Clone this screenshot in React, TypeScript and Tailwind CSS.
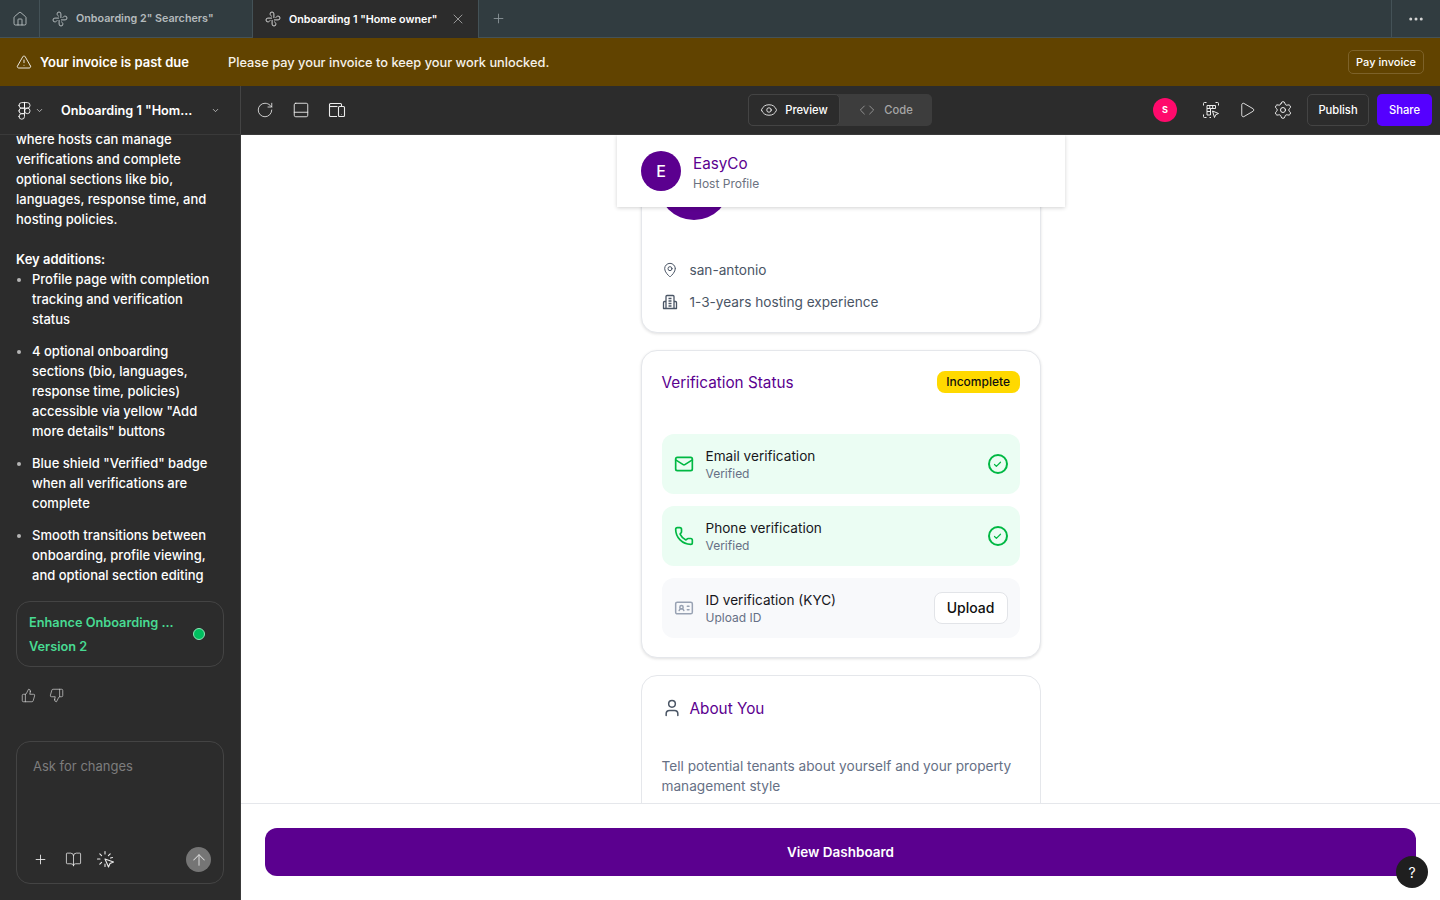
import React from "react";
import {
  BookOpen,
  Check,
  ChevronDown,
  Code,
  Ellipsis,
  Eye,
  Figma,
  House,
  Mail,
  MapPin,
  PanelBottom,
  Phone,
  Play,
  Plus,
  RotateCw,
  Settings,
  ThumbsDown,
  ThumbsUp,
  TriangleAlert,
  User,
  X,
  ArrowUp,
  IdCard,
} from "lucide-react";

const MakeIcon = () => (
  <svg width="16" height="16" viewBox="0 0 16 16" fill="none" stroke="currentColor" strokeWidth="1" strokeLinecap="round">
    {[0, 90, 180, 270].map((deg) => (
      <path key={deg} transform={`rotate(${deg} 8 8)`} d="M8.9 6.6V2.900a1.900 1.900 0 0 0-3.800 0c0 1 .6 1.600 1.300 2.200" />
    ))}
  </svg>
);

const ResponsiveIcon = () => (
  <svg width="18" height="18" viewBox="0 0 18 18" fill="none" stroke="currentColor" strokeWidth="1.1">
    <path d="M9 15.500H2.500a1 1 0 0 1-1-1v-11a1 1 0 0 1 1-1h10a1 1 0 0 1 1 1V5" />
    <path d="M1.500 5.500h8" />
    <rect x="10.500" y="5.500" width="6" height="10" rx="1" />
    <path d="M13.500 13.500v.4" />
  </svg>
);

const FrameIcon = () => (
  <svg width="18" height="18" viewBox="0 0 18 18" fill="none" stroke="currentColor" strokeWidth="1">
    <path d="M1.500 4.500v-2a1 1 0 0 1 1-1h2M13.500 1.500h2a1 1 0 0 1 1 1v2M1.500 13.500v2a1 1 0 0 0 1 1h2M7.500 16.500h1.500" />
    <path d="M5 4.500h8.500v3H8.500v6.500H5V4.500ZM5 7.500h3.500M5 10.500h3.500M7.800 4.500v3M10.700 4.500v3" />
    <path d="M10.500 10l6 2.500-2.800 1.200-1.200 2.800-2-6.500Z" />
  </svg>
);

const ClickSparkIcon = () => (
  <svg width="20" height="20" viewBox="0 0 20 20" fill="none" stroke="currentColor" strokeWidth="1.1" strokeLinecap="round">
    <path d="M9 1.500v2.500M3.800 3.800l1.800 1.800M14.200 3.800l-1.800 1.800M1.500 9H4M3.800 14.200l1.800-1.800M9 14v2.500M16.500 7.500l-2 .5" />
    <path d="M9 9l8.500 3-3.500 1.500-1.500 3.500L9 9Z" strokeLinejoin="round" />
  </svg>
);

const OfficeIcon = () => (
  <svg width="16" height="16" viewBox="0 0 16 16" fill="none" stroke="currentColor" strokeWidth="1.3" strokeLinejoin="round">
    <path d="M4 14.500V2.500a1 1 0 0 1 1-1h6a1 1 0 0 1 1 1v12" />
    <path d="M4 7.500H2.500a1 1 0 0 0-1 1v6h13v-6a1 1 0 0 0-1-1H12" />
    <path d="M6.500 4.500h3M6.500 7h3M6.500 9.500h3M6.500 12h3" />
  </svg>
);

const bullets = [
  "Profile page with completion tracking and verification status",
  '4 optional onboarding sections (bio, languages, response time, policies) accessible via yellow "Add more details" buttons',
  'Blue shield "Verified" badge when all verifications are complete',
  "Smooth transitions between onboarding, profile viewing, and optional section editing",
];

const VerifiedRow = ({ icon, title }: { icon: React.ReactNode; title: string }) => (
  <div className="flex h-[60px] items-center rounded-[12px] bg-[#ebfdf3] pl-[12px] pr-[12px]">
    <span className="w-[32px] text-[#00b843]">{icon}</span>
    <div className="flex-1 pt-[2px]">
      <p className="text-[13.6px] leading-[18px] text-[#17171c]">{title}</p>
      <p className="text-[12px] leading-[18px] text-[#667085]">Verified</p>
    </div>
    <span className="relative flex h-5 w-5 items-center justify-center rounded-full border-2 border-[#00b843] text-[#00b843]">
      <Check size={9} strokeWidth={3.2} />
    </span>
  </div>
);

export default function App() {
  return (
    <div className="flex h-[900px] w-[1440px] flex-col overflow-hidden bg-white font-['Inter',sans-serif]">
      {/* tab bar */}
      <div className="flex h-[38px] shrink-0 items-stretch border-b border-[#445257] bg-[#313c40] text-[10.75px] font-semibold">
        <div className="flex w-[40px] items-center justify-center border-r border-[#445257] text-[#c9cfd1]">
          <House size={16} strokeWidth={1.2} />
        </div>
        <div className="flex w-[213px] items-center gap-[8px] border-r border-[#445257] pl-[12px] text-[#b4babc]">
          <MakeIcon />
          <span className="pt-[2px]">Onboarding 2" Searchers"</span>
        </div>
        <div className="-mb-px flex w-[226px] items-center border-r border-[#445257] bg-[#2c2c2c] pl-[12px] text-white">
          <span className="text-[#d4d4d4]">
            <MakeIcon />
          </span>
          <span className="ml-[8px] pt-[2px]">Onboarding 1 "Home owner"</span>
          <X size={16} strokeWidth={1} className="ml-[13px] text-[#cfcfcf]" />
        </div>
        <div className="flex w-[38px] items-center justify-center text-[#8b9699]">
          <Plus size={15} strokeWidth={1.4} />
        </div>
        <div className="flex-1" />
        <div className="flex w-[49px] items-center justify-center border-l border-[#445257] text-[#d4d4d4]">
          <Ellipsis size={18} strokeWidth={2} />
        </div>
      </div>

      {/* invoice banner */}
      <div className="flex h-[48px] shrink-0 items-center bg-[#614300] pl-[16px] pr-[16px] text-[13px] text-white">
        <TriangleAlert size={16} strokeWidth={1.3} />
        <span className="ml-[8px] w-[188px] pt-px font-semibold">Your invoice is past due</span>
        <span className="pt-px text-[12.8px] font-medium text-[#f6f2ea]">
          Please pay your invoice to keep your work unlocked.
        </span>
        <button className="ml-auto flex h-[24px] items-center rounded-[5px] border border-[#7d6229] px-[7px] text-[11px] font-medium">
          Pay invoice
        </button>
      </div>

      {/* toolbar */}
      <div className="flex h-[49px] shrink-0 items-center border-b border-[#3a3a3a] bg-[#2c2c2c] text-white">
        <div className="flex h-full w-[241px] shrink-0 items-center border-r border-[#444444] pl-[15px] pr-[20px]">
          <Figma size={19} strokeWidth={1.1} />
          <ChevronDown size={9} strokeWidth={2} className="ml-[1px] text-[#d4d4d4]" />
          <span className="ml-[17px] pt-px text-[12.7px] font-semibold">Onboarding 1 "Hom...</span>
          <ChevronDown size={9} strokeWidth={2} className="ml-auto text-[#d4d4d4]" />
        </div>
        <div className="flex items-center gap-[18px] pl-[15px] text-[#ececec]">
          <RotateCw size={18} strokeWidth={1.1} />
          <PanelBottom size={18} strokeWidth={1.2} />
          <ResponsiveIcon />
        </div>
        <div className="ml-[402px] flex h-[32px] w-[184px] items-stretch rounded-[5px] bg-[#3d3d3d] text-[11.2px] font-medium">
          <div className="flex w-[92px] items-center justify-center gap-[7px] rounded-[5px] border border-[#444444] bg-[#2c2c2c]">
            <Eye size={18} strokeWidth={1.1} />
            <span className="pt-px">Preview</span>
          </div>
          <div className="flex flex-1 items-center justify-center gap-[9px] text-[#a6a6a6]">
            <Code size={16} strokeWidth={1.2} />
            <span className="pt-px">Code</span>
          </div>
        </div>
        <span className="ml-[221px] flex h-[24px] w-[24px] items-center justify-center rounded-full bg-[#ff0a6c] text-[9px] font-bold text-white">
          S
        </span>
        <span className="ml-[25px] text-[#ececec]">
          <FrameIcon />
        </span>
        <Play size={18} strokeWidth={1.1} className="ml-[18px]" />
        <Settings size={20} strokeWidth={1.1} className="ml-[17px]" />
        <button className="ml-[14px] flex h-[32px] w-[62px] items-center justify-center rounded-[5px] border border-[#444444] pt-px text-[11.2px] font-medium">
          Publish
        </button>
        <button className="ml-[8px] flex h-[32px] w-[55px] items-center justify-center rounded-[5px] bg-[#5500ff] pt-px text-[11.2px] font-medium">
          Share
        </button>
      </div>

      <div className="flex min-h-0 flex-1">
        {/* chat sidebar */}
        <aside className="flex w-[241px] shrink-0 flex-col border-r border-[#3a3a3a] bg-[#2c2c2c] text-white">
          <div className="-mt-[6px] h-[472px] shrink-0 pl-[16px] pr-[16px] text-[13px] font-medium leading-[20px]">
            <p>
              where hosts can manage verifications and complete optional sections like bio, languages, response time,
              and hosting policies.
            </p>
            <p className="mt-[20px] font-semibold">Key additions:</p>
            <ul className="list-disc pl-[16px] marker:text-[#b5b5b5]">
              {bullets.map((b) => (
                <li key={b} className="mb-[12px]">
                  {b}
                </li>
              ))}
            </ul>
          </div>
          <div className="mx-[16px] flex h-[66px] shrink-0 items-center justify-between rounded-[14px] border border-[#444444] pl-[12px] pr-[18px] text-[12.75px] font-semibold leading-[24px] text-[#48da92]">
            <div className="pt-[2px]">
              <p>Enhance Onboarding ...</p>
              <p>Version 2</p>
            </div>
            <span className="h-[12px] w-[12px] rounded-full border-[1.5px] border-[#8ce8b8] bg-[#00bf5f]" />
          </div>
          <div className="mt-[21px] flex gap-[13px] pl-[21px] text-[#d6d6d6]">
            <ThumbsUp size={15} strokeWidth={1.1} />
            <ThumbsDown size={15} strokeWidth={1.1} />
          </div>
          <div className="mx-[16px] mt-[38px] flex h-[143px] shrink-0 flex-col rounded-[14px] border border-[#444444] pb-[11px] pl-[16px] pr-[12px] pt-[15px]">
            <p className="text-[13px] text-[#7d7d7d]">Ask for changes</p>
            <div className="mt-auto flex items-center text-[#ececec]">
              <Plus size={15} strokeWidth={1.4} />
              <BookOpen size={17} strokeWidth={1.1} className="ml-[17px]" />
              <span className="ml-[14px]">
                <ClickSparkIcon />
              </span>
              <span className="ml-auto flex h-[25px] w-[25px] items-center justify-center rounded-full bg-[#757575] text-[#d8d8d8]">
                <ArrowUp size={18} strokeWidth={1.4} />
              </span>
            </div>
          </div>
        </aside>

        {/* preview */}
        <main className="relative flex min-w-0 flex-1 flex-col">
          <div className="relative min-h-0 flex-1 overflow-hidden">
            <div className="absolute left-[376px] top-0 z-10 flex h-[72px] w-[448px] items-center gap-[12px] bg-white pl-[24px] shadow-[0_1px_4px_rgba(0,0,0,0.18)]">
              <span className="flex h-[40px] w-[40px] items-center justify-center rounded-full bg-[#5b008f] text-[16px] font-medium text-white">
                E
              </span>
              <div>
                <p className="text-[15.25px] leading-[24px] text-[#5b008f]">EasyCo</p>
                <p className="text-[12px] leading-[15px] text-[#6b7280]">Host Profile</p>
              </div>
            </div>
            <div className="-mt-[20px] flex flex-col items-center gap-[17px]">
              <section className="h-[218px] w-[400px] shrink-0 rounded-[16px] border border-[#e5e7eb] bg-white px-[20px] shadow-[0_1px_3px_rgba(0,0,0,0.12)]">
                <div className="mt-[32px] h-[72px] w-[72px] -translate-x-[4px] rounded-full bg-[#5b008f]" />
                <div className="mt-[34px] flex items-center gap-[12px] text-[13.65px] leading-[32px] text-[#4a5565]">
                  <MapPin size={16} strokeWidth={1.5} />
                  <span>san-antonio</span>
                </div>
                <div className="flex items-center gap-[12px] text-[13.65px] leading-[32px] text-[#4a5565]">
                  <OfficeIcon />
                  <span>1-3-years hosting experience</span>
                </div>
              </section>

              <section className="h-[308px] w-[400px] shrink-0 rounded-[16px] border border-[#e5e7eb] bg-white px-[20px] shadow-[0_1px_3px_rgba(0,0,0,0.12)]">
                <div className="mt-[20px] flex h-[24px] items-center justify-between">
                  <h2 className="text-[15.3px] text-[#5b008f]">Verification Status</h2>
                  <span className="mb-[2px] flex h-[22px] items-center rounded-[8px] bg-[#ffd900] px-[9.5px] text-[12px] font-medium text-[#101010]">
                    Incomplete
                  </span>
                </div>
                <div className="mt-[39px] flex flex-col gap-[12px]">
                  <VerifiedRow icon={<Mail size={20} strokeWidth={2} />} title="Email verification" />
                  <VerifiedRow icon={<Phone size={20} strokeWidth={2} />} title="Phone verification" />
                  <div className="flex h-[60px] items-center rounded-[12px] bg-[#f8f9fb] pl-[12px] pr-[12px]">
                    <span className="w-[32px] text-[#98a2b3]">
                      <IdCard size={20} strokeWidth={1.8} />
                    </span>
                    <div className="flex-1 pt-[2px]">
                      <p className="text-[13.6px] leading-[18px] text-[#17171c]">ID verification (KYC)</p>
                      <p className="text-[12px] leading-[18px] text-[#667085]">Upload ID</p>
                    </div>
                    <button className="h-[32px] w-[74px] rounded-[8px] border border-[#e2e4e8] bg-white pb-[2px] text-[14px] font-medium text-[#101010]">
                      Upload
                    </button>
                  </div>
                </div>
              </section>

              <section className="h-[300px] w-[400px] shrink-0 rounded-[16px] border border-[#e5e7eb] bg-white px-[20px]">
                <div className="mt-[20px] flex h-[24px] items-center gap-[8px]">
                  <User size={20} strokeWidth={1.8} className="text-[#4a5565]" />
                  <h2 className="pt-[2px] text-[15.3px] text-[#5b008f]">About You</h2>
                </div>
                <p className="mt-[36px] text-[13.65px] leading-[20px] text-[#667085]">
                  Tell potential tenants about yourself and your property management style
                </p>
              </section>
            </div>
          </div>
          <div className="z-20 flex h-[97px] shrink-0 items-start border-t border-[#e5e7eb] bg-white px-[24px] pt-[24px]">
            <button className="h-[48px] w-full rounded-[12px] bg-[#5b008f] text-[13.5px] font-semibold text-white">
              View Dashboard
            </button>
          </div>
          <span className="absolute bottom-[12px] right-[12px] z-30 flex h-[32px] w-[32px] items-center justify-center rounded-full bg-[#1f1f1f] text-[14px] text-white">
            ?
          </span>
        </main>
      </div>
    </div>
  );
}
